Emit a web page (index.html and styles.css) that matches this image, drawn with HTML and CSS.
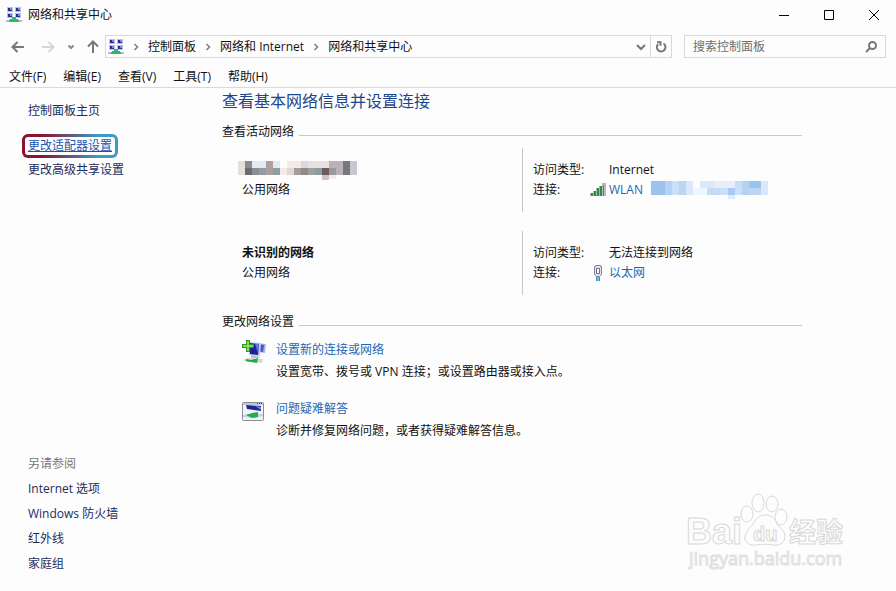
FILE: index.html
```
<!DOCTYPE html>
<html lang="zh-CN">
<head>
  <meta charset="UTF-8" />
  <meta name="viewport" content="width=device-width, initial-scale=1.0" />
  <title>网络和共享中心</title>
  <link rel="stylesheet" href="styles.css">
</head>
<body>

  <!-- Shared icons -->
  <svg class="sprite" aria-hidden="true">
    <symbol id="network" viewBox="0 0 16 16">
      <rect x="1" y="0" width="6" height="5" fill="#b9c2dd"/>
      <rect x="9" y="0" width="6" height="5" fill="#b9c2dd"/>
      <rect x="1" y="6" width="6" height="5" fill="#b9c2dd"/>
      <rect x="9" y="6" width="6" height="5" fill="#b9c2dd"/>
      <path d="M2 1h4v3H2zM10 1h4v3h-4zM2 7h4v3H2zM10 7h4v3h-4z" fill="#2c2c9c"/>
      <path d="M4 1h2v2H4zM12 1h2v2h-2zM4 7h2v2H4zM12 7h2v2h-2z" fill="#7c8be0"/>
      <path d="M0 14h16" stroke="#b5bcc4" stroke-width="2"/>
      <path d="M6 10h4v2h2v1h1v2H3v-2h1v-1h2z" fill="#2fb574"/>
    </symbol>
    <symbol id="crumb" viewBox="0 0 6 8">
      <path d="M1.5 1l3 3-3 3" fill="none" stroke="#777" stroke-width="1.4"/>
    </symbol>
  </svg>

  <!-- Title bar -->
  <header class="titlebar">
    <svg class="icon"><use href="#network"/></svg>
    <h1>网络和共享中心</h1>
    <div class="window-btns">
      <button type="button" aria-label="最小化"><svg viewBox="0 0 10 10"><path d="M0 5.5h10"/></svg></button>
      <button type="button" aria-label="最大化"><svg viewBox="0 0 10 10"><path d="M.5.5h9v9h-9z"/></svg></button>
      <button type="button" aria-label="关闭"><svg viewBox="0 0 10 10"><path d="M0 0l10 10M10 0L0 10"/></svg></button>
    </div>
  </header>

  <!-- Address bar -->
  <div class="toolbar">
    <div class="nav-btns">
      <button type="button" aria-label="后退"><svg width="14" height="12" viewBox="0 0 14 12"><path d="M13 6H2M6.500 1L1.500 6l5 5" stroke="#777"/></svg></button>
      <button type="button" aria-label="前进" disabled><svg width="14" height="12" viewBox="0 0 14 12"><path d="M1 6h11M7.500 1l5 5-5 5" stroke="#d6d6d6"/></svg></button>
      <button type="button" class="recent" aria-label="最近的位置"><svg width="8" height="6" viewBox="0 0 8 6"><path d="M1.500 1.500L4 4l2.500-2.500" stroke="#888"/></svg></button>
      <button type="button" aria-label="上移"><svg width="12" height="14" viewBox="0 0 12 14"><path d="M6 13V2M1 6.500l5-5 5 5" stroke="#777"/></svg></button>
    </div>
    <nav class="address">
      <svg class="icon"><use href="#network"/></svg>
      <svg class="crumb"><use href="#crumb"/></svg>
      <a href="#">控制面板</a>
      <svg class="crumb"><use href="#crumb"/></svg>
      <a href="#">网络和 Internet</a>
      <svg class="crumb"><use href="#crumb"/></svg>
      <a href="#">网络和共享中心</a>
      <button type="button" class="history" aria-label="以前的位置"><svg width="10" height="8" viewBox="0 0 10 8"><path d="M1 2l4 4 4-4" stroke="#777"/></svg></button>
      <button type="button" class="refresh" aria-label="刷新"><svg width="12" height="12" viewBox="0 0 12 12"><path d="M8.500 2.500a4.300 4.300 0 1 1-5.500.700M2 1.200h3.500v3.600" stroke="#777"/></svg></button>
    </nav>
    <form class="search">
      <input type="search" aria-label="搜索控制面板" placeholder="搜索控制面板">
      <svg width="12" height="12" viewBox="0 0 12 12"><circle cx="7.500" cy="4.500" r="3.500"/><path d="M5 7L1 11"/></svg>
    </form>
  </div>

  <!-- Menu -->
  <nav class="menu">
    <button type="button">文件(F)</button>
    <button type="button">编辑(E)</button>
    <button type="button">查看(V)</button>
    <button type="button">工具(T)</button>
    <button type="button">帮助(H)</button>
  </nav>

  <div class="body">
    <!-- Sidebar -->
    <aside class="sidebar">
      <a href="#" class="home">控制面板主页</a>
      <a href="#" class="marked">更改适配器设置</a>
      <a href="#">更改高级共享设置</a>
      <div class="see-also">
        <h2>另请参阅</h2>
        <a href="#">Internet 选项</a>
        <a href="#">Windows 防火墙</a>
        <a href="#">红外线</a>
        <a href="#">家庭组</a>
      </div>
    </aside>

    <!-- Main -->
    <main>
      <h2>查看基本网络信息并设置连接</h2>

      <h3>查看活动网络</h3>
      <div class="network">
        <div class="network-name">
          <div class="line">
            <!-- Hidden network name -->
            <svg class="mosaic" width="119" height="20" viewBox="0 0 119 20" shape-rendering="crispEdges">
              <path fill="#e6dfd9" d="M0 1h7v14H0z"/>
              <path fill="#8b8b8f" d="M7 1h7v7H7z"/>
              <path fill="#696b70" d="M7 8h7v7H7z"/>
              <path fill="#e4e8ef" d="M14 1h14v7H14zM35 1h7v7h-7z"/>
              <path fill="#8b8e94" d="M14 8h7v7h-7z"/>
              <path fill="#8e9da6" d="M21 8h7v7h-7zM35 8h7v7h-7z"/>
              <path fill="#aaa09d" d="M28 1h7v14h-7z"/>
              <path fill="#f2ebe8" d="M42 8h7v7h-7zM49 1h14v7H49zM91 15h7v4h-7z"/>
              <path fill="#dcd8dc" d="M49 8h7v7h-7zM63 1h7v7h-7z"/>
              <path fill="#a29c98" d="M56 8h7v7h-7z"/>
              <path fill="#8f8b8b" d="M63 8h7v7h-7z"/>
              <path fill="#e9e0df" d="M70 1h21v7H70z"/>
              <path fill="#a0a09e" d="M70 8h7v7h-7z"/>
              <path fill="#8d9ba2" d="M77 8h7v7h-7z"/>
              <path fill="#6d5b5b" d="M84 8h7v7h-7z"/>
              <path fill="#cdc4c6" d="M84 15h7v5h-7z"/>
              <path fill="#b9b3b7" d="M91 1h14v14H91z"/>
              <path fill="#77767a" d="M105 1h7v14h-7z"/>
              <path fill="#c5c8ce" d="M112 1h7v14h-7z"/>
              <path fill="#9c999d" d="M91 8h7v7h-7z"/>
            </svg>
          </div>
          <p>公用网络</p>
        </div>
        <dl>
          <dt>访问类型:</dt>
          <dd>Internet</dd>
          <dt>连接:</dt>
          <dd class="link">
            <svg class="signal" width="16" height="14" viewBox="0 0 16 14">
              <path d="M0 10h3v3H0zM3 8h3v5H3zM6 5h3v8H6zM9 3h3v10H9z" fill="#a5b9a8"/>
              <path d="M1 10h2v3H1zM4 8h2v5H4zM7 5h2v8H7zM10 3h2v10h-2z" fill="#2f8a4c"/>
              <path d="M12 0h4v13h-4z" fill="#b8bcb9"/>
              <path d="M13 2h1v11h-1z" fill="#4c8f60"/>
            </svg>
            <a href="#">WLAN</a>
            <svg class="mosaic" width="117" height="18" viewBox="0 0 117 18" shape-rendering="crispEdges">
              <path fill="#9bc3ec" d="M0 0h14v14H0zM98 0h12v7H98z"/>
              <path fill="#b5d2f3" d="M14 0h7v14h-7zM91 0h7v14h-7z"/>
              <path fill="#cbdff7" d="M21 0h7v14h-7zM70 7h21v7H70z"/>
              <path fill="#bad6f2" d="M28 0h7v14h-7zM98 7h12v7H98z"/>
              <path fill="#d9e8fa" d="M35 0h7v14h-7zM49 0h14v7H49zM110 0h7v14h-7z"/>
              <path fill="#f0f6fd" d="M42 7h7v7h-7zM49 7h7v7h-7z"/>
              <path fill="#c4dbf6" d="M56 7h7v7h-7zM63 7h7v7h-7z"/>
              <path fill="#e5eefa" d="M63 0h21v7H63z"/>
              <path fill="#c8ddf6" d="M84 0h7v7h-7z"/>
              <path fill="#a9caf0" d="M77 7h7v7h-7z"/>
              <path fill="#dceafa" d="M77 14h7v4h-7z"/>
            </svg>
          </dd>
        </dl>
      </div>

      <div class="network">
        <div class="network-name">
          <p><strong>未识别的网络</strong></p>
          <p>公用网络</p>
        </div>
        <dl>
          <dt>访问类型:</dt>
          <dd>无法连接到网络</dd>
          <dt>连接:</dt>
          <dd class="link">
            <svg class="plug" width="10" height="16" viewBox="0 0 10 16">
              <path d="M1.500 1.500h1v-1h5v1h1v8l-2 2h-3l-2-2z" fill="#dfe4f0" stroke="#7c8398"/>
              <path d="M3.500 3.500h3v5h-3z" fill="#fff" stroke="#686f88"/>
              <path d="M3 12h4v4H3z" fill="#2f97cf"/>
              <path d="M5 12v4" stroke="#b5dff2"/>
            </svg>
            <a href="#">以太网</a>
          </dd>
        </dl>
      </div>

      <h3>更改网络设置</h3>
      <ul class="tasks">
        <li>
          <svg width="24" height="24" viewBox="0 0 24 24">
            <path d="M15 3l9 1-1 9-8-1z" fill="#a9b5e6"/>
            <path d="M16 4l6 1-1 7-5-1z" fill="#4456c4"/>
            <path d="M7 2l12 1-1 13-11-1z" fill="#c3cbe8"/>
            <path d="M8 3l9 1-1 11-8-1z" fill="#1d209a"/>
            <path d="M13 4l4 0-1 9z" fill="#5f78dd"/>
            <path d="M9 15l7 1 2 2H9z" fill="#bcc2ca"/>
            <path d="M1 20l5-2 15 1-1 4-7-1-8 0z" fill="#d3d8dd"/>
            <path d="M4 19l5 1 7-2-1 5-6-1-5-1z" fill="#20a84b"/>
            <path d="M4 0h4v4h4v4H8v4H4V8H0V4h4z" fill="#29922a"/>
            <path d="M5 1h2v4h4v2H7v4H5V7H1V5h4z" fill="#83df4c"/>
          </svg>
          <div>
            <a href="#">设置新的连接或网络</a>
            <p>设置宽带、拨号或 VPN 连接；或设置路由器或接入点。</p>
          </div>
        </li>
        <li>
          <svg width="24" height="24" viewBox="0 0 24 24">
            <rect x=".5" y="3.500" width="21" height="18" rx="1" fill="#f3f4f8" stroke="#8a8d96"/>
            <path d="M1 4h20v2H1z" fill="#c2c7d5"/>
            <path d="M15 4h1v1h-1zM17 4h1v1h-1zM19 4h1v1h-1z" fill="#4a5065"/>
            <path d="M4 6l15 1v5l-14-2z" fill="#1d2794"/>
            <path d="M13 7l6 1v3z" fill="#6c89df"/>
            <path d="M1 16l6-1 14 0v2l-8 2-12-1z" fill="#cbd0da"/>
            <path d="M4 16l6-2 6-1v5l-6 1z" fill="#21ad50"/>
          </svg>
          <div>
            <a href="#">问题疑难解答</a>
            <p>诊断并修复网络问题，或者获得疑难解答信息。</p>
          </div>
        </li>
      </ul>
    </main>
  </div>

  <!-- Watermark -->
  <svg class="watermark" width="164" height="80" viewBox="0 0 164 80">
    <ellipse cx="61" cy="21" rx="6" ry="8"/>
    <ellipse cx="72" cy="10" rx="6" ry="9"/>
    <ellipse cx="86" cy="11" rx="6" ry="8"/>
    <ellipse cx="95" cy="24" rx="6" ry="8"/>
    <path d="M79 22c6 0 10 3 12 9 3 4 8 7 8 12 0 7-6 10-12 9-6-1-11-1-17 0-7 1-12-3-11-9 1-5 5-8 8-12 3-5 6-9 12-9z"/>
    <text x="0" y="51" class="wm-logo">Bai</text>
    <text x="67" y="48" class="wm-du">du</text>
    <text x="103" y="49" class="wm-cn">经验</text>
    <text x="3" y="72" class="wm-url">jingyan.baidu.com</text>
  </svg>

</body>
</html>
```
FILE: styles.css
```
/* Reset & Base */
* {
  margin: 0;
  padding: 0;
  box-sizing: border-box;
}
body {
  display: flex;
  flex-direction: column;
  min-height: 100vh;
  position: relative;
  font: 12px/20px "Open Sans", "Noto Sans CJK SC", sans-serif;
  background: #fdfdfd;
  color: #111;
}
a {
  color: #1a69b4;
  text-decoration: none;
}
a:hover {
  text-decoration: underline;
}
button {
  border: none;
  background: none;
  font: inherit;
  color: inherit;
}
svg {
  display: block;
  flex: none;
}
.sprite {
  position: absolute;
  width: 0;
  height: 0;
}
.icon {
  width: 16px;
  height: 16px;
}

/* Title bar */
.titlebar {
  display: flex;
  align-items: center;
  height: 29px;
  padding-left: 6px;
}
.titlebar h1 {
  margin-left: 6px;
  font-size: 12px;
  font-weight: normal;
}
.window-btns {
  display: flex;
  margin-left: auto;
}
.window-btns button {
  display: flex;
  justify-content: center;
  align-items: center;
  width: 45px;
  height: 29px;
}
.window-btns svg {
  width: 10px;
  height: 10px;
  fill: none;
  stroke: #000;
}

/* Address bar */
.toolbar {
  display: flex;
  align-items: center;
  height: 35px;
  padding-right: 10px;
}
.toolbar button svg {
  fill: none;
  stroke-width: 2;
}
.nav-btns {
  display: flex;
  align-items: center;
  gap: 16px;
  padding: 0 6px 0 11px;
}
.nav-btns .recent {
  margin: 0 -4px;
}
.address {
  flex: 1;
  display: flex;
  align-items: center;
  height: 23px;
  padding-left: 2px;
  border: 1px solid #d9d9d9;
}
.address a {
  color: #111;
}
.crumb {
  width: 6px;
  height: 8px;
  margin: 0 9px;
}
.history {
  margin: 0 4px 0 auto;
}
.refresh {
  display: flex;
  align-items: center;
  height: 21px;
  padding: 0 4px;
  border-left: 1px solid #d9d9d9;
}
.search {
  display: flex;
  align-items: center;
  width: 202px;
  height: 23px;
  margin-left: 12px;
  padding: 0 8px;
  border: 1px solid #d9d9d9;
}
.search input {
  flex: 1;
  min-width: 0;
  border: none;
  outline: none;
  background: none;
  font: inherit;
}
.search input::placeholder {
  color: #6d6d6d;
}
.search svg {
  fill: none;
  stroke: #777;
  stroke-width: 2;
}

/* Menu */
.menu {
  display: flex;
  gap: 17px;
  height: 24px;
  padding: 3px 9px 0;
  border-bottom: 1px solid #dadada;
}

/* Layout */
.body {
  flex: 1;
  display: flex;
}
.sidebar {
  display: flex;
  flex-direction: column;
  align-items: flex-start;
  gap: 5px;
  width: 222px;
  padding: 13px 0 17px 28px;
}
.sidebar a {
  color: #1c2c5c;
}
.sidebar .home {
  margin-bottom: 8px;
}
.sidebar .marked {
  margin: 0 -6px -3px;
  padding: 0 3px;
  border: 3px solid transparent;
  border-radius: 6px;
  background: linear-gradient(#fdfdfd, #fdfdfd) padding-box, linear-gradient(90deg, #8c1230 20%, #3a9cc4 80%) border-box;
  line-height: 18px;
  color: #1a56b0;
  text-decoration: underline;
}
.see-also {
  display: flex;
  flex-direction: column;
  gap: 5px;
  margin-top: auto;
}
.see-also h2 {
  font-size: 12px;
  font-weight: normal;
  color: #777;
}

/* Main */
main {
  flex: 1;
  padding-right: 94px;
}
main h2 {
  font-size: 16px;
  line-height: 26px;
  font-weight: normal;
  color: #1c458f;
}
main h3 {
  display: flex;
  align-items: center;
  gap: 5px;
  margin: 8px 0 6px;
  font-size: 12px;
  font-weight: normal;
}
main h3::after {
  content: "";
  flex: 1;
  height: 1px;
  margin-top: 6px;
  background: #c8c8c8;
}
.network {
  display: grid;
  grid-template-columns: 300px 1fr;
  margin-bottom: 17px;
}
.network + .network {
  margin-top: 19px;
}
.network-name {
  padding: 12px 0 12px 20px;
}
.line {
  height: 20px;
}
.network-name .mosaic {
  margin-left: -4px;
}
.network dl {
  display: grid;
  grid-template-columns: 76px 1fr;
  align-content: start;
  padding: 12px 0 12px 10px;
  border-left: 1px solid #c8c8c8;
}
.link {
  display: flex;
  align-items: center;
  gap: 8px;
}
.signal {
  margin-left: -19px;
  margin-right: -5px;
}
.plug {
  margin-left: -16px;
  margin-right: -2px;
}

/* Tasks */
.tasks {
  display: flex;
  flex-direction: column;
  gap: 17px;
  margin-top: 8px;
  padding-left: 20px;
  list-style: none;
}
.tasks li {
  display: flex;
  gap: 10px;
}
.tasks p {
  margin-top: 2px;
}

/* Watermark */
.watermark {
  position: absolute;
  right: 46px;
  bottom: 18px;
  fill: #fdfdfd;
  stroke: #d8d8d8;
}
.wm-logo {
  font: bold 36px "Liberation Sans", sans-serif;
}
.wm-du {
  font: bold 20px "Liberation Sans", sans-serif;
}
.wm-cn {
  font: bold 27px "Noto Sans CJK SC", sans-serif;
}
.wm-url {
  font: 18px "Open Sans", sans-serif;
  stroke: #dedede;
}
```
